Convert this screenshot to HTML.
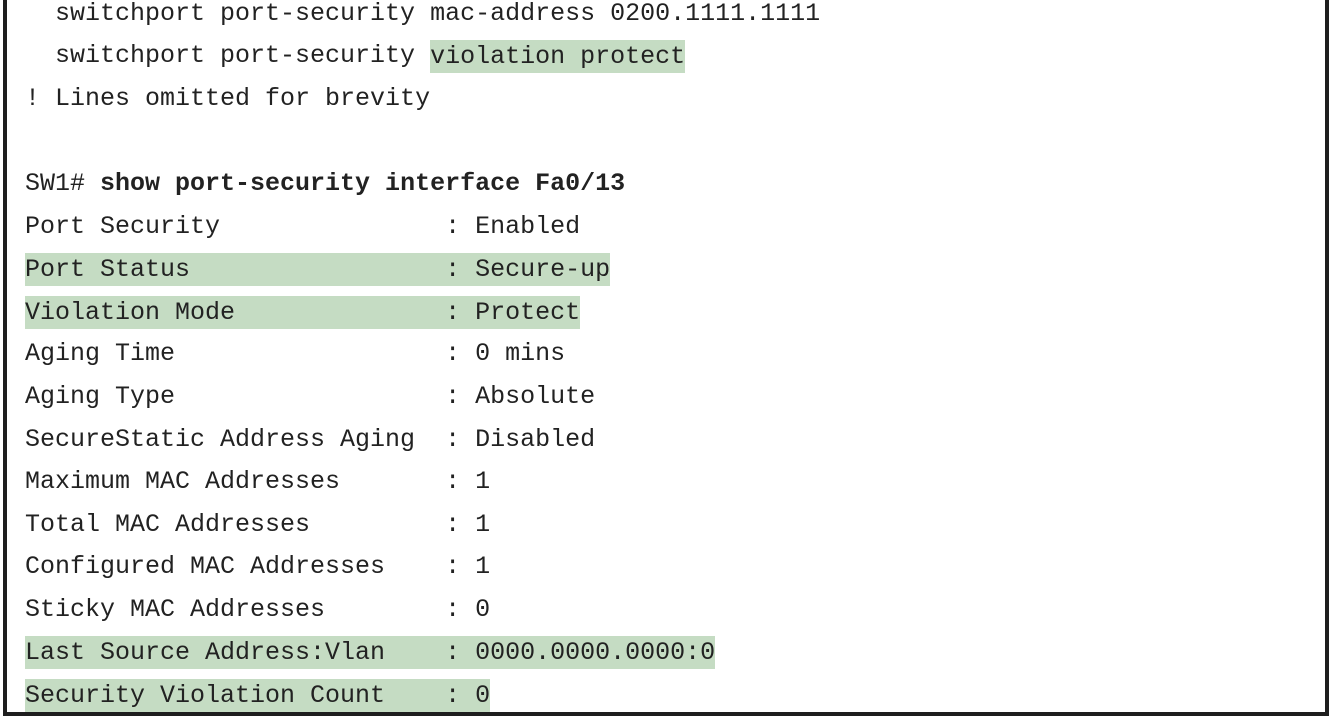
<!DOCTYPE html>
<html><head><meta charset="utf-8"><style>
html,body{margin:0;padding:0;background:#fff;width:1334px;height:726px;overflow:hidden}
.box{position:absolute;left:3px;top:-10px;width:1318px;height:722px;border:4px solid #1e1e1e;border-top:none;}
.txt{position:absolute;left:25px;top:-7.3px;font-family:"Liberation Mono",monospace;font-size:25px;color:#222}
.l{height:42.6px;line-height:42.6px;display:flex;align-items:center;white-space:pre}
.h{background:#c5dcc3;display:inline-block;height:33px;line-height:33px}
b{font-weight:bold}
</style></head><body>
<div class="box"></div>
<div class="txt"><div class="l">  switchport port-security mac-address 0200.1111.1111</div><div class="l">  switchport port-security <span class="h">violation protect</span></div><div class="l">! Lines omitted for brevity</div><div class="l"> </div><div class="l">SW1# <b>show port-security interface Fa0/13</b></div><div class="l">Port Security               : Enabled</div><div class="l"><span class="h">Port Status                 : Secure-up</span></div><div class="l"><span class="h">Violation Mode              : Protect</span></div><div class="l">Aging Time                  : 0 mins</div><div class="l">Aging Type                  : Absolute</div><div class="l">SecureStatic Address Aging  : Disabled</div><div class="l">Maximum MAC Addresses       : 1</div><div class="l">Total MAC Addresses         : 1</div><div class="l">Configured MAC Addresses    : 1</div><div class="l">Sticky MAC Addresses        : 0</div><div class="l"><span class="h">Last Source Address:Vlan    : 0000.0000.0000:0</span></div><div class="l"><span class="h">Security Violation Count    : 0</span></div></div>
</body></html>
